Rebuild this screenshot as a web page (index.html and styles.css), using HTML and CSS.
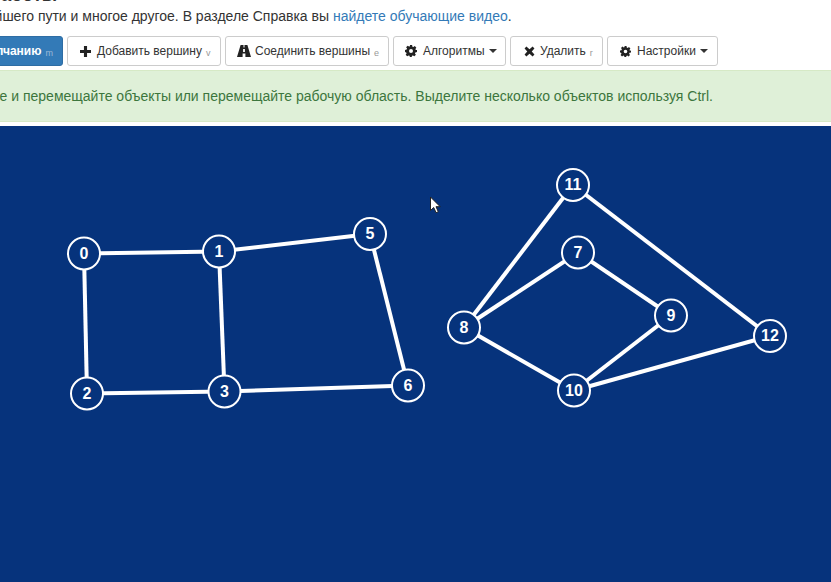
FILE: index.html
```html
<!DOCTYPE html>
<html lang="ru">
<head>
<meta charset="utf-8">
<title>Граф</title>
<link rel="stylesheet" href="styles.css">
</head>
<body>
<main class="page">
  <h2 class="heading">Начало работы</h2>
  <p class="intro">Поиск кратчайшего пути и многое другое. В разделе Справка вы <a href="#">найдете обучающие видео</a>.</p>
  <div class="toolbar">
    <button class="btn btn-primary"><span>По умолчанию</span><small>m</small></button>
    <button class="btn btn-add"><svg class="icon icon-sm" viewBox="0 0 12 12"><path d="M4.300 0h3.400v4.300H12v3.400H7.700V12H4.300V7.700H0V4.300h4.300z"/></svg><span>Добавить вершину</span><small>v</small></button>
    <button class="btn btn-connect"><svg class="icon icon-road" viewBox="0 0 14 12"><path d="M3.600 0h2.900v2.600h1V0h2.900L14 12H8.400V8.600H5.600V12H0zM6.100 4v3h1.800V4z"/></svg><span>Соединить вершины</span><small>e</small></button>
    <button class="btn btn-algo"><svg class="icon" viewBox="0 0 24 24"><use href="#cog"/></svg><span>Алгоритмы</span><i class="caret"></i></button>
    <button class="btn btn-delete"><svg class="icon icon-x" viewBox="0 0 12 12"><path d="M2.600.6 6 3.600 9.400.6l2 2L8.400 6l3 3.400-2 2L6 8.400l-3.400 3-2-2L3.600 6l-3-3.400z"/></svg><span>Удалить</span><small>r</small></button>
    <button class="btn btn-settings"><svg class="icon icon-sm" viewBox="0 0 24 24"><use href="#cog"/></svg><span>Настройки</span><i class="caret"></i></button>
  </div>
  <div class="alert">Нажимайте и перемещайте объекты или перемещайте рабочую область. Выделите несколько объектов используя Ctrl.</div>
</main>
<svg class="canvas" width="831" height="456" viewBox="0 126 831 456">
  <defs>
    <path id="cog" fill-rule="evenodd" d="M9.800 0h4.400l.6 3.300 2 .8 2.800-1.900 3.100 3.100-1.900 2.800.8 2L24 9.800v4.400l-3.300.6-.8 2 1.900 2.800-3.100 3.100-2.800-1.900-2 .8-.6 3.300H9.800l-.6-3.300-2-.8-2.800 1.900-3.100-3.100 1.900-2.800-.8-2L0 14.200V9.800l3.300-.6.8-2-1.900-2.800 3.100-3.100 2.800 1.900 2-.8zM12 8a4 4 0 1 0 0 8 4 4 0 0 0 0-8z"/>
  </defs>
  <g class="edges">
    <line x1="84" y1="253.500" x2="219" y2="251.500"/>
    <line x1="84" y1="253.500" x2="87" y2="393.500"/>
    <line x1="219" y1="251.500" x2="224.500" y2="391.500"/>
    <line x1="219" y1="251.500" x2="370" y2="234"/>
    <line x1="87" y1="393.500" x2="224.500" y2="391.500"/>
    <line x1="224.500" y1="391.500" x2="408" y2="385.500"/>
    <line x1="370" y1="234" x2="408" y2="385.500"/>
    <line x1="573" y1="185" x2="464" y2="327.500"/>
    <line x1="573" y1="185" x2="770" y2="336"/>
    <line x1="578" y1="252.500" x2="464" y2="327.500"/>
    <line x1="578" y1="252.500" x2="671" y2="315.500"/>
    <line x1="464" y1="327.500" x2="574" y2="390.500"/>
    <line x1="671" y1="315.500" x2="574" y2="390.500"/>
    <line x1="574" y1="390.500" x2="770" y2="336"/>
  </g>
  <g class="nodes">
    <circle cx="84" cy="253.500" r="16"/><text x="84" y="258.500">0</text>
    <circle cx="219" cy="251.500" r="16"/><text x="219" y="256.500">1</text>
    <circle cx="87" cy="393.500" r="16"/><text x="87" y="398.500">2</text>
    <circle cx="224.500" cy="391.500" r="16"/><text x="224.500" y="396.500">3</text>
    <circle cx="370" cy="234" r="16"/><text x="370" y="239">5</text>
    <circle cx="408" cy="385.500" r="16"/><text x="408" y="390.500">6</text>
    <circle cx="573" cy="185" r="16"/><text x="573" y="190">11</text>
    <circle cx="578" cy="252.500" r="16"/><text x="578" y="257.500">7</text>
    <circle cx="464" cy="327.500" r="16"/><text x="464" y="332.500">8</text>
    <circle cx="671" cy="315.500" r="16"/><text x="671" y="320.500">9</text>
    <circle cx="574" cy="390.500" r="16"/><text x="574" y="395.500">10</text>
    <circle cx="770" cy="336" r="16"/><text x="770" y="341">12</text>
  </g>
  <path class="cursor" d="M430.500 197v13.500l3.200-3 2.400 5.200 2.200-1-2.300-5h4.200z"/>
</svg>
</body>
</html>
```

FILE: styles.css
```css
html, body {
  margin: 0;
  padding: 0;
  height: 582px;
  overflow: hidden;
  background: #fff;
}

body {
  font-family: "Liberation Sans", Arial, sans-serif;
  font-size: 14px;
  line-height: 20px;
  color: #333;
}

.page {
  height: 126px;
  overflow: hidden;
}

.heading {
  margin: -15px 0 0 -80px;
  font-size: 18px;
  line-height: 20px;
  font-weight: 700;
}

.intro {
  margin: 1px 0 0 -91px;
  white-space: nowrap;
}

.intro a {
  color: #337ab7;
  text-decoration: none;
}

.toolbar {
  display: flex;
  gap: 4px;
  margin: 10px 0 0 -40px;
  height: 30px;
}

.btn {
  box-sizing: border-box;
  display: flex;
  align-items: center;
  flex: none;
  height: 30px;
  padding: 0;
  border: 1px solid #ccc;
  border-radius: 3px;
  background: #fff;
  color: #333;
  font: 12px/18px "Liberation Sans", Arial, sans-serif;
  white-space: nowrap;
}

.btn small {
  margin: 4px 0 0 4px;
  font-size: 9px;
  line-height: 12px;
  color: #999;
}

.btn-primary {
  width: 103px;
  justify-content: flex-end;
  padding-right: 9px;
  border-color: #2e6da4;
  background: #337ab7;
  color: #fff;
  font-weight: 700;
}

.btn-primary small {
  color: #9db9d6;
  font-weight: 400;
}

.btn-add {
  width: 154px;
  padding-left: 12px;
}

.btn-connect {
  width: 164px;
  padding-left: 11px;
}

.btn-algo {
  width: 113px;
  padding-left: 11px;
}

.btn-delete {
  width: 93px;
  padding-left: 13px;
}

.btn-settings {
  width: 111px;
  padding-left: 12px;
}

.icon {
  flex: none;
  width: 12px;
  height: 12px;
  margin-right: 6px;
  fill: #222;
}

.icon-sm {
  width: 11px;
  height: 11px;
}

.icon-road {
  width: 14px;
  margin-right: 4px;
}

.icon-x {
  width: 11px;
  height: 11px;
  margin-right: 5px;
}

.caret {
  width: 0;
  height: 0;
  margin-left: 4px;
  border-top: 4px solid #333;
  border-left: 4px solid transparent;
  border-right: 4px solid transparent;
}

.alert {
  box-sizing: border-box;
  height: 52px;
  margin: 4px 0 0 -5px;
  padding: 15px 0;
  border: 1px solid #d6e9c6;
  border-width: 1px 0;
  background: #dff0d8;
  color: #3c763d;
  white-space: nowrap;
  text-indent: -62px;
}

.canvas {
  display: block;
  background: #06337c;
}

.edges line {
  stroke: #fff;
  stroke-width: 4;
}

.nodes circle {
  fill: #06337c;
  stroke: #fff;
  stroke-width: 2;
}

.nodes text {
  fill: #fff;
  font: 700 16px "Liberation Sans", Arial, sans-serif;
  text-anchor: middle;
}

.cursor {
  fill: #fff;
  stroke: #222;
  stroke-width: 1;
}
```
